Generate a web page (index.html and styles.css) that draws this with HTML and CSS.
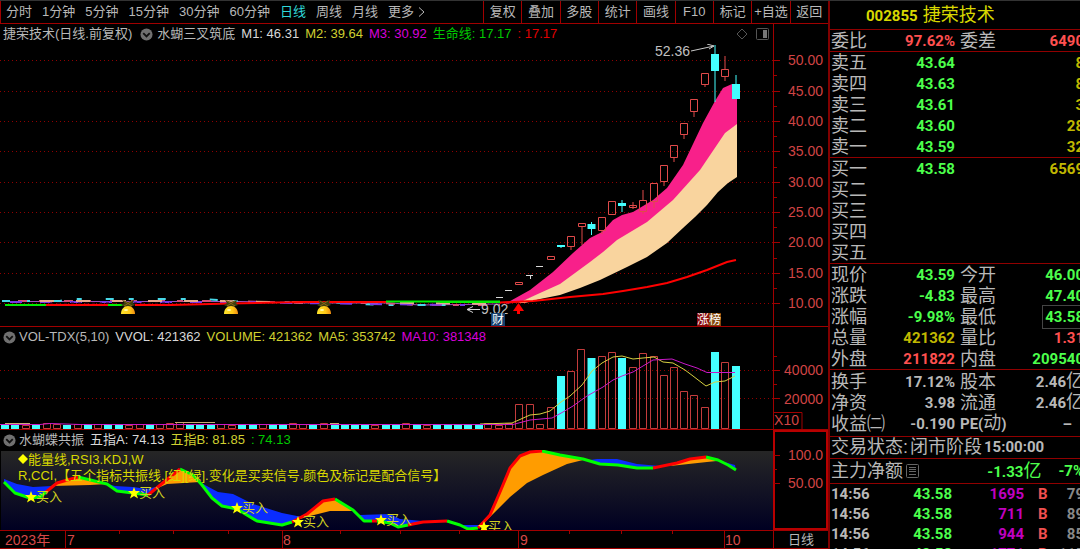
FILE: index.html
```html
<!DOCTYPE html>
<html lang="zh-CN">
<head>
<meta charset="utf-8">
<title>捷荣技术 002855</title>
<link rel="stylesheet" href="styles.css">
</head>
<body>
<div class="app">
<main class="charts">
  <nav class="toolbar">
    <div class="periods">
      <button>分时</button><button>1分钟</button><button>5分钟</button><button>15分钟</button><button>30分钟</button><button>60分钟</button><button class="active">日线</button><button>周线</button><button>月线</button><button class="more">更多 <svg class="chev" viewBox="0 0 7 10"><path d="M1 0.500L6 5L1 9.500"/></svg></button>
    </div>
    <div class="tools">
      <button>复权</button><button>叠加</button><button>多股</button><button>统计</button><button>画线</button><button>F10</button><button>标记</button><button>+自选</button><button>返回</button>
    </div>
  </nav>

  <section class="panel">
    <div class="pane">
      <header class="legend">
        <span>捷荣技术(日线.前复权)</span>
        <svg class="toggle inset" viewBox="0 0 14 14"><circle cx="7" cy="7" r="6.500"/><path d="M3.500 5.500L7 9L10.500 5.500"/></svg>
        <span>水蝴三叉筑底</span>
        <span class="white">M1: 46.31</span><span class="yellow">M2: 39.64</span><span class="magenta">M3: 30.92</span><span class="green">生命线: 17.17</span><span class="red">: 17.17</span>
        <svg class="winicons" viewBox="0 0 34 14"><path d="M7 2L12 7L7 12L2 7Z"/><rect x="21.500" y="1.500" width="12" height="11" rx="1"/><path class="solid" d="M28 3h4v8h-4z"/></svg>
      </header>
      <svg class="plot" viewBox="0 44 773 282">
        <path class="grid" d="M0 60.500H773M0 91.500H773M0 121.500H773M0 151.500H773M0 182.500H773M0 212.500H773M0 242.500H773M0 273.500H773M0 303.500H773"/>
        <path fill="#f8208a" d="M505 304L530 290L553 272L573 253L590 238L602 232L613 220L622 215L633 212L653 200L667 188L683 165L703 123L715 101L723 88L732 84L737 85V125L725 135L700 171L673 201L647 223L617 241L603 253L590 263L560 285L540 294L520 302Z"/>
        <path fill="#f9d49e" d="M518 303L540 293L560 284L590 262L603 252L617 240L647 222L673 200L691 180L700 170L725 133L737 124V177L728 183L718 192L707 205L695 217L683 228L667 243L647 257L627 267L600 280L580 288L560 295L540 299L525 303Z"/>
        <g fill="none" stroke-width="1">
          <path stroke="#a050c0" d="M4 301.500H240L300 303H390L420 305L500 304"/>
          <path stroke="#48d8e8" stroke-width="2" stroke-dasharray="8 15 5 24" d="M2 301H60L68 299H200L250 302H330L380 305H465"/>
          <path stroke="#d45078" stroke-width="2" stroke-dasharray="9 12 6 19" d="M18 301H230L300 303H380L420 305H500"/>
          <path stroke="#7838e8" stroke-width="2" stroke-dasharray="12 18" d="M10 302H235L300 303L370 304L465 305"/>
          <path stroke="#e8a890" stroke-width="2" stroke-dasharray="14 22" d="M40 301H220L270 302H360L410 303L490 304"/>
          <path stroke="#300010" stroke-width="2" stroke-dasharray="3 4" d="M50 303.500H170"/>
        </g>
        <g fill="none" stroke-width="2">
          <path stroke="#0e0" d="M5 305H46M108 305H125M386 301.500H500M440 302H500"/>
          <path stroke="#f00" d="M46 305H108M135 305H171L230 303.500L300 302H386"/>
          <path stroke="#f00" d="M500 302.500L533 301L570 297L603 294L623 291L647 287L667 283L687 277L707 270L727 262L736 260"/>
        </g>
        <g fill="none" stroke="#e04a4a">
          <path d="M721.500 69.500h7v7h-7zM725 56v13M725 77v4M701.500 73.500h7v11h-7zM705 85v2M690.500 99.500h7v12h-7zM694 112v5M680.500 123.500h7v11h-7zM684 135v4M670.500 145.500h7v12h-7zM674 158v4M660.500 165.500h7v16h-7zM664 182v4M650.500 183.500h7v18h-7zM654 202v6M639.500 200.500h7v11h-7zM643 190v10M643 212v2M629.500 205.500h7v2h-7zM633 202v7M608.500 201.500h7v13h-7zM598.500 217.500h7v13h-7zM602 231v3M578.500 223.500h7v3h-7zM582 227v18M567.500 236.500h7v10h-7zM571 247v3M547.500 256.500h7v3h-7zM515.500 282.500h7v2h-7z"/>
        </g>
        <path fill="none" stroke="#4ff" d="M736 75v10M715 45v57M622 200v12M591.500 222v13M561 246v2"/>
        <path fill="#4ff" d="M732 84h8v15h-8zM711 54h8v17h-8zM618 203h8v3h-8zM587.500 224h8v5h-8zM557 245h8v2h-8z"/>
        <path fill="none" stroke="#d8d8d8" d="M536 266.500h7M526 275.500h7M530.500 275v4M505 290.500h7M496 297.500h7M467 309.500H480M473 306.500L467 309.500L473 312.500"/>
        <path fill="#f00" d="M518.500 303L524 311H520V314H517V311H513Z"/>
        <text class="mark" x="655" y="56">52.36</text>
        <path fill="none" stroke="#c8c8c8" d="M691 51L714 46M707 44L714 46L709 49"/>
        <text class="mark" x="481" y="314">9.02</text>
        <path fill="#14406e" d="M491 313h14v13h-14z"/><path fill="#8b0c0c" d="M697 313h12v13h-12z"/><path fill="#84480c" d="M709 313h12v13h-12z"/>
        <text class="badge" x="492" y="324">财</text><text class="badge" x="697" y="324">涨</text><text class="badge" x="709" y="324">榜</text>
        <defs>
          <linearGradient id="gold"><stop offset="0" stop-color="#ffe52c"/><stop offset=".6" stop-color="#ffca18"/><stop offset="1" stop-color="#f08c10"/></linearGradient>
          <g id="fruit"><path fill="#3d3f10" d="M-6 -14L0 -12L6 -14L5 -11L7 -9L2 -7L0 -8L-3 -7L-7 -9L-4 -11Z"/><path stroke="#8a6414" d="M-4 -13L4 -8M4 -13L-4 -8"/><path fill="url(#gold)" d="M-7 0C-7 -5 -4 -8 0 -8S7 -5 7 0Z"/><ellipse cx="-2" cy="-4" rx="2" ry="1" fill="#fffbb0"/></g>
        </defs>
        <use href="#fruit" x="128" y="314"/><use href="#fruit" x="231" y="314"/><use href="#fruit" x="324" y="314"/>
      </svg>
    </div>
    <svg class="axis" viewBox="773 24 55 302">
      <path class="rule" d="M773.500 24V326M774 60.500h6M774 91.500h6M774 121.500h6M774 151.500h6M774 182.500h6M774 212.500h6M774 242.500h6M774 273.500h6M774 303.500h6M774 75.500h3M774 106.500h3M774 136.500h3M774 167.500h3M774 197.500h3M774 227.500h3M774 258.500h3M774 288.500h3"/>
      <g class="scale"><text x="823" y="65">50.00</text><text x="823" y="96">45.00</text><text x="823" y="126">40.00</text><text x="823" y="156">35.00</text><text x="823" y="187">30.00</text><text x="823" y="217">25.00</text><text x="823" y="247">20.00</text><text x="823" y="278">15.00</text><text x="823" y="308">10.00</text></g>
    </svg>
  </section>

  <section class="panel">
    <div class="pane">
      <header class="legend">
        <svg class="toggle" viewBox="0 0 14 14"><circle cx="7" cy="7" r="6.500"/><path d="M3.500 5.500L7 9L10.500 5.500"/></svg>
        <span>VOL-TDX(5,10)</span><span class="white">VVOL: 421362</span><span class="yellow">VOLUME: 421362</span><span class="yellow">MA5: 353742</span><span class="magenta">MA10: 381348</span>
      </header>
      <svg class="plot" viewBox="0 347 773 82">
        <path class="grid" d="M0 370.500H773M0 398.500H773"/>
        <path fill="none" stroke="#c43c3c" d="M22.500 425.500h7v3h-7zM43.500 423.500h7v5h-7zM53.500 424.500h7v4h-7zM74.500 424.500h7v4h-7zM94.500 424.500h7v4h-7zM125.500 425.500h7v3h-7zM136.500 424.500h7v4h-7zM156.500 424.500h7v4h-7zM166.500 423.500h7v5h-7zM176.500 422.500h7v6h-7zM217.500 424.500h7v4h-7zM228.500 425.500h7v3h-7zM259.500 424.500h7v4h-7zM289.500 423.500h7v5h-7zM299.500 424.500h7v4h-7zM320.500 423.500h7v5h-7zM371.500 425.500h7v3h-7zM402.500 423.500h7v5h-7zM423.500 425.500h7v3h-7zM484.500 423.500h7v5h-7zM495.500 425.500h7v3h-7zM505.500 423.500h7v5h-7z"/>
        <path fill="none" stroke="#c43c3c" d="M515.500 404.500h7v24h-7zM526.500 404.500h7v24h-7zM536.500 424.500h7v4h-7zM547.500 407.500h7v21h-7zM567.500 371.500h7v57h-7zM577.500 349.500h7v79h-7zM598.500 356.500h7v72h-7zM608.500 352.500h7v76h-7zM629.500 367.500h7v61h-7zM639.500 353.500h7v75h-7zM650.500 356.500h7v72h-7zM660.500 375.500h7v53h-7zM670.500 367.500h7v61h-7zM680.500 391.500h7v37h-7zM690.500 395.500h7v33h-7zM701.500 407.500h7v21h-7zM721.500 362.500h7v66h-7z"/>
        <path fill="none" stroke="#4ff" stroke-width="8" d="M5 425v4M15 424v5M36 425v4M67 425v4M88 425v4M108 424v5M119 424v5M150 424v5M190 425v4M200 425v4M211 425v4M242 425v4M253 425v4M273 425v4M283 425v4M313 425v4M335 425v4M345 425v4M355 425v4M365 425v4M386 425v4M396 425v4M417 425v4M437 425v4M448 425v4M458 424v5M468 425v4M479 425v4M561 376v53M591.500 358v71M622 358v71M715 352v77M736 366v63"/>
        <path fill="none" stroke="#c9ab75" d="M5 423.500h25M93 424.500h18M175 422.500h40M225 424.500h50M330 423.500h9"/>
        <path fill="none" stroke="#d6d040" d="M480 424L512 423L530 415L540 414L550 411L561 402L570 396L582 385L592 371L602 363L613 357L622 356L633 359L643 358L654 357L663 362L673 363L685 370L693 376L706 386L715 382L725 381L735 376"/>
        <path fill="none" stroke="#c818c8" d="M0 424.500H40L50 423.500L80 424.500H513L530 420L552 418L563 412L573 406L587 396L603 387L613 380L622 376L633 372L643 366L653 360L672 359L685 364L697 368L707 372.500H735"/>
      </svg>
    </div>
    <svg class="axis" viewBox="773 327 55 102">
      <path class="rule" d="M773.500 327V429M774 370.500h6M774 398.500h6M774 384.500h3M774 356.500h3M774 412.500h28V429"/>
      <g class="scale"><text x="823" y="375">40000</text><text x="823" y="404">20000</text><text x="799" y="425">X10</text></g>
    </svg>
  </section>

  <section class="panel">
    <div class="pane">
      <header class="legend">
        <svg class="toggle" viewBox="0 0 14 14"><circle cx="7" cy="7" r="6.500"/><path d="M3.500 5.500L7 9L10.500 5.500"/></svg>
        <span>水蝴蝶共振</span><span class="white">五指A: 74.13</span><span class="yellow">五指B: 81.85</span><span class="green">: 74.13</span>
      </header>
      <svg class="plot" viewBox="0 450 773 80">
        <defs>
          <linearGradient id="night" x2="0" y2="1"><stop offset="0" stop-color="#262626"/><stop offset="1" stop-color="#000022"/></linearGradient>
          <path id="star" d="M0 -6L1.500 -2H6L2.500 1L4 5.500L0 3L-4 5.500L-2.500 1L-6 -2H-1.500Z"/>
        </defs>
        <path fill="url(#night)" d="M1 451H773V530H1Z"/>
        <path fill="#0a2cff" d="M4 479L17 484L33 487L52 486L45 493L40 497L30 498L15 493L4 482ZM107 484L115 486L133 487L147 489L160 486L148 495L133 493L117 491ZM200 482L205 485L218 492L233 494L253 504L282 513L302 517L292 522L282 525L257 521L237 509L222 506L212 498ZM353 512L360 515L390 514L400 519L423 521L447 521L463 525L480 525L478 528L468 529L460 525L447 521L423 522L408 525L398 527L390 523L364 521ZM590 460L597 459L617 459L637 464L660 466L653 468L637 468L618 465L600 464ZM717 460L735 465L736 470Z"/>
        <path fill="#ff9c00" d="M52 486L57 483L78 477L107 484L90 485ZM158 488L180 469L193 475L200 482L167 484ZM300 519L307 514L323 501L335 499L353 511L330 511L310 516ZM482 525L490 515L500 492L510 468L520 456L530 452L542 451L583 460L567 464L543 475L527 483L510 497L490 517ZM670 466L690 459L706 457L717 461L707 462Z"/>
        <g fill="none" stroke-width="3" stroke-linejoin="round">
          <path stroke="#0f0" d="M4 482L15 493L30 498L40 497L46 492M78 477L107 484L117 491L133 493L148 495M180 469L193 475L202 485L212 498L222 506L237 509L257 521L282 525L292 522M335 499L353 510L364 521H372M377 521L390 523L398 527L408 525M447 521L460 525L468 529L478 528M542 451L560 455L583 459L600 464L618 465L637 468H653M706 457L718 460L728 465L736 470"/>
          <path stroke="#f00" d="M46 492L57 483L78 477M148 495L180 469M292 522L307 514L323 501L335 499M372 521H377M408 525L423 522L447 521M478 528L490 515L500 492L510 468L520 456L530 452L542 451M653 468L677 463L690 459L706 457"/>
        </g>
        <g fill="#ff0"><use href="#star" x="31" y="497"/><use href="#star" x="134" y="493"/><use href="#star" x="237" y="508"/><use href="#star" x="298" y="522"/><use href="#star" x="381" y="520"/><use href="#star" x="484" y="527"/><path d="M23 454L28 459L23 464L18 459Z"/></g>
        <g class="note"><text x="28" y="464">能量线,RSI3.KDJ,W</text><text x="18" y="480">R,CCI,【五个指标共振线.[红][绿].变化是买卖信号.颜色及标记是配合信号】</text></g>
        <g class="signal"><text x="36" y="501">买入</text><text x="139" y="497">买入</text><text x="242" y="512">买入</text><text x="303" y="526">买入</text><text x="386" y="524">买入</text><text x="488" y="531">买入</text></g>
      </svg>
    </div>
    <svg class="axis" viewBox="773 430 55 100">
      <path class="box" d="M774 431H827V529H774Z"/>
      <path class="rule" d="M774 455.500h6M774 483.500h6M774 469.500h3"/>
      <g class="scale"><text x="823" y="460">100.0</text><text x="823" y="488">50.00</text></g>
    </svg>
  </section>

  <footer class="dates">
    <svg class="plot" viewBox="0 531 773 17">
      <path class="rule" d="M65.500 531v17M282.500 531v17M518.500 531v17M724.500 531v17M119.500 531v3M173.500 531v3M228.500 531v3M340.500 531v3M400.500 531v3M459.500 531v3M569.500 531v3M621.500 531v3M672.500 531v3"/>
      <g class="date"><text x="5" y="545">2023年</text><text x="67" y="545">7</text><text x="283" y="545">8</text><text x="520" y="545">9</text><text x="725" y="545">10</text></g>
    </svg>
    <button class="unit">日线</button>
  </footer>
</main>

<aside class="quote">
  <h1><b>002855</b> 捷荣技术</h1>
  <table class="block"><tr><th>委比</th><td class="rose">97.62%</td><th>委差</th><td class="rose">6490</td></tr></table>
  <table class="block">
    <tr><th>卖五</th><td class="up">43.64</td><th></th><td class="qty">8</td></tr>
    <tr><th>卖四</th><td class="up">43.63</td><th></th><td class="qty">8</td></tr>
    <tr><th>卖三</th><td class="up">43.61</td><th></th><td class="qty">3</td></tr>
    <tr><th>卖二</th><td class="up">43.60</td><th></th><td class="qty">28</td></tr>
    <tr><th>卖一</th><td class="up">43.59</td><th></th><td class="qty">32</td></tr>
  </table>
  <table class="block">
    <tr><th>买一</th><td class="up">43.58</td><th></th><td class="qty">6569</td></tr>
    <tr><th>买二</th><td></td><th></th><td></td></tr>
    <tr><th>买三</th><td></td><th></th><td></td></tr>
    <tr><th>买四</th><td></td><th></th><td></td></tr>
    <tr><th>买五</th><td></td><th></th><td></td></tr>
  </table>
  <table class="block">
    <tr><th>现价</th><td class="up">43.59</td><th>今开</th><td class="up">46.00</td></tr>
    <tr><th>涨跌</th><td class="up">-4.83</td><th>最高</th><td class="up">47.40</td></tr>
    <tr><th>涨幅</th><td class="up">-9.98%</td><th>最低</th><td class="up"><span class="framed">43.58</span></td></tr>
    <tr><th>总量</th><td class="qty">421362</td><th>量比</th><td class="rose">1.31</td></tr>
    <tr><th>外盘</th><td class="rose">211822</td><th>内盘</th><td class="up">209540</td></tr>
  </table>
  <table class="block padded">
    <tr><th>换手</th><td>17.12%</td><th>股本</th><td>2.46<i>亿</i></td></tr>
    <tr><th>净资</th><td>3.98</td><th>流通</th><td>2.46<i>亿</i></td></tr>
    <tr><th>收益㈡</th><td>-0.190</td><th><b>PE(</b>动<b>)</b></th><td class="dash">–</td></tr>
  </table>
  <p class="state"><span>交易状态:</span><span>闭市阶段</span><b>15:00:00</b></p>
  <div class="flow"><span>主力净额</span><svg class="list" viewBox="0 0 13 14"><rect x="0.500" y="0.500" width="12" height="13" rx="1"/><path d="M3 3.500h7M3 5.500h7M3 7.500h7M3 10.500h7"/></svg><b class="amount">-1.33<i>亿</i></b><b class="share">-7%</b></div>
  <table class="ticks">
    <tr><td>14:56</td><td class="up">43.58</td><td class="vol">1695</td><td class="side">B</td><td class="cnt">79</td></tr>
    <tr><td>14:56</td><td class="up">43.58</td><td class="vol">711</td><td class="side">B</td><td class="cnt">89</td></tr>
    <tr><td>14:56</td><td class="up">43.58</td><td class="vol">944</td><td class="side">B</td><td class="cnt">85</td></tr>
    <tr><td>14:56</td><td class="up">43.58</td><td class="vol">1771</td><td class="side">B</td><td class="cnt">115</td></tr>
  </table>
</aside>
</div>
</body>
</html>
```
FILE: styles.css
```css
* { box-sizing: border-box; }
body {
  margin: 0;
  background: #000;
  color: #b8b8b8;
  font: 13px/20px "Liberation Sans", "Noto Sans CJK SC", sans-serif;
}
button {
  padding: 0;
  border: 0;
  background: none;
  color: inherit;
  font: inherit;
  white-space: nowrap;
}
svg { display: block; }
i { font-style: normal; font-weight: 400; }

.app {
  display: grid;
  grid-template-columns: minmax(0, 1fr) 252px;
  height: 100vh;
  overflow: hidden;
  border-top: 1px solid #333;
}
.charts { min-width: 0; }

.toolbar {
  display: flex;
  justify-content: space-between;
  height: 23px;
  border-bottom: 1px solid #a00000;
  border-left: 1px solid #a00000;
}
.periods { display: flex; gap: 10px; padding-left: 5px; }
.active { color: #2fd8d8; }
.more { display: flex; align-items: center; gap: 4px; }
.chev { width: 7px; height: 10px; fill: none; stroke: #b8b8b8; }
.tools { display: grid; grid-template-columns: repeat(9, 1fr); width: 345px; }
.tools button { border-left: 1px solid #a00000; }

.panel {
  display: grid;
  grid-template-columns: minmax(0, 1fr) 55px;
  border-bottom: 1px solid #a00000;
}
.legend {
  display: flex;
  align-items: center;
  gap: 6px;
  height: 20px;
  padding: 0 4px 0 3px;
  white-space: nowrap;
}
.toggle { width: 13px; height: 13px; margin-right: -3px; fill: #707070; }
.toggle.inset { margin: 0 -2px 0 2px; }
.toggle path { fill: none; stroke: #111; stroke-width: 2; }
.winicons { width: 34px; height: 14px; margin-left: auto; fill: none; stroke: #555; }
.winicons .solid { fill: #777; stroke: none; }
.white { color: #d8d8d8; }
.yellow { color: #d0d030; }
.magenta { color: #d800d8; }
.green { color: #00c800; }
.red { color: #e00000; }

.plot, .axis { width: 100%; height: auto; }
.grid { fill: none; stroke: #900000; stroke-dasharray: 1 3; }
.rule { fill: none; stroke: #a00000; }
.box { fill: none; stroke: #b80000; stroke-width: 2; }
.scale { fill: #d04444; font-size: 14px; text-anchor: end; }
.mark { fill: #c0c0c0; font-size: 14px; }
.badge { fill: #fff; font-size: 12px; }
.note { fill: #d8d800; }
.signal { fill: #d0d020; }

.dates {
  display: grid;
  grid-template-columns: minmax(0, 1fr) 55px;
  border-bottom: 1px solid #a00000;
}
.date { fill: #d84848; font-size: 14px; }
.unit { border-left: 1px solid #a00000; line-height: 17px; }

.quote {
  min-width: 0;
  overflow: hidden;
  border-left: 2px solid #800000;
  font-size: 18px;
}
.quote h1 {
  height: 29px;
  margin: 0;
  padding-left: 36px;
  border-bottom: 1px solid #900000;
  color: #d8d800;
  font-size: 18px;
  font-weight: 400;
  line-height: 28px;
}
.quote b, .quote td { font-family: Roboto, "Noto Sans CJK SC", sans-serif; font-size: 15px; font-weight: 700; }
.quote i { font-size: 18px; }
table { border-collapse: separate; border-spacing: 0; table-layout: fixed; }
.block, .ticks { width: 254px; }
.block { border-bottom: 1px solid #900000; }
.block tr { height: 21px; }
.block th, .block td { height: 21px; padding: 0; line-height: 20px; white-space: nowrap; }
.block th { width: 56px; padding-left: 1px; font-weight: 400; text-align: left; }
.block td { width: 69px; text-align: right; }
.block td:nth-child(2) { padding-right: 2px; }
.block th:nth-child(3) { padding-left: 3px; }
.padded { padding: 1px 0 2px; }
.up { color: #4cff4c; }
.rose { color: #ff5050; }
.qty { color: #c0b800; }
.framed { box-shadow: 0 0 0 2px #000, 0 0 0 3px #444; }
.block .dash { padding-right: 12px; }

.state {
  display: flex;
  gap: 2px;
  height: 22px;
  margin: 0;
  padding-left: 1px;
  border-bottom: 1px solid #900000;
  line-height: 21px;
  white-space: nowrap;
}
.flow {
  display: flex;
  align-items: center;
  width: 254px;
  height: 25px;
  padding-left: 1px;
  border-bottom: 1px solid #900000;
  line-height: 24px;
  white-space: nowrap;
}
.list { width: 13px; height: 14px; margin-left: 3px; fill: none; stroke: #666; }
.flow .amount { margin-left: auto; color: #4cff4c; }
.flow .share { margin-left: 17px; color: #4cff4c; }

.ticks td { width: 53px; height: 20px; padding: 0 0 0 1px; line-height: 20px; }
.ticks .up { width: 69px; text-align: right; }
.ticks .vol { width: 72px; color: #c000c0; text-align: right; }
.ticks .side { width: 25px; padding-left: 14px; color: #f05050; }
.ticks .cnt { width: 35px; color: #888; text-align: right; }
```
